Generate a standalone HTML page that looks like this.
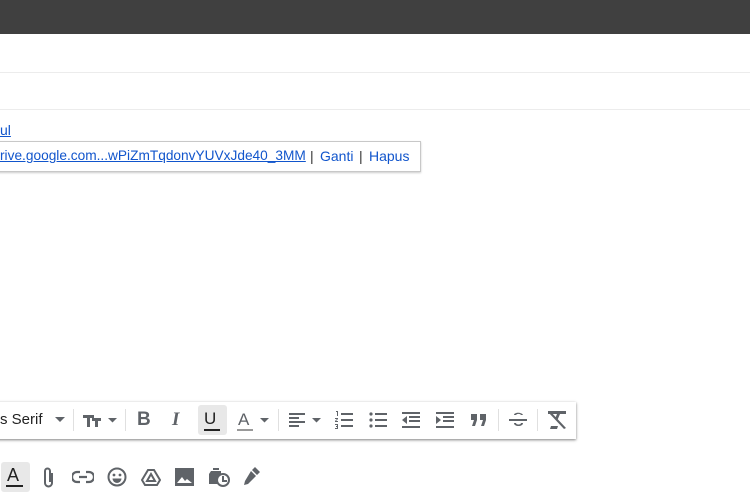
<!DOCTYPE html>
<html><head><style>
body{margin:0;width:750px;height:500px;overflow:hidden;background:#fff;font-family:"Liberation Sans",Arial,sans-serif;position:relative}
.a{position:absolute;white-space:nowrap}
.ic{position:absolute;fill:#5f6368;stroke:none}
</style></head><body>
<div class="a" style="left:0;top:0;width:750px;height:34px;background:#404040"></div>
<div class="a" style="left:0;top:72px;width:750px;height:1px;background:#ececec"></div>
<div class="a" style="left:0;top:109px;width:750px;height:1px;background:#ececec"></div>
<div class="a" style="left:0;top:122px;font-size:14px;color:#1155cc;text-decoration:underline">ul</div>
<div class="a" style="left:-10px;top:141px;width:429px;height:29px;border:1px solid #c8c8c8;box-shadow:0 1px 2px rgba(0,0,0,.2);background:#fff"></div>
<div class="a" style="left:0;top:148px;font-size:13.7px;color:#1155cc;text-decoration:underline">rive.google.com...wPiZmTqdonvYUVxJde40_3MM</div>
<div class="a" style="left:310px;top:148px;font-size:14px;color:#333">|</div>
<div class="a" style="left:320px;top:148px;font-size:14px;color:#1155cc">Ganti</div>
<div class="a" style="left:359px;top:148px;font-size:14px;color:#333">|</div>
<div class="a" style="left:369px;top:148px;font-size:14px;color:#1155cc">Hapus</div>

<div class="a" style="left:-10px;top:402px;width:586px;height:37px;background:#fff;box-shadow:0 1px 3px rgba(0,0,0,.35),0 1px 2px rgba(0,0,0,.2)"></div>
<div class="a" style="left:0;top:411px;font-size:15px;color:#222">s Serif</div>
<svg class="ic" style="left:55px;top:417px" width="10" height="6"><path d="M0 0h10L5 5z"/></svg>
<div class="a" style="left:73px;top:409px;width:1px;height:22px;background:#e0e0e0"></div>
<svg class="ic" style="left:83px;top:412px" width="20" height="16"><path d="M0 3h11v3H7v9H4V6H0zM9 6h9v3h-3v6h-3V9H9z"/></svg>
<svg class="ic" style="left:108px;top:418px" width="9" height="5"><path d="M0 0h9L4.5 4.5z"/></svg>
<div class="a" style="left:125px;top:409px;width:1px;height:22px;background:#e0e0e0"></div>
<div class="a" style="left:137px;top:409px;font-size:19px;font-weight:bold;color:#5f6368">B</div>
<div class="a" style="left:172px;top:409px;font-size:19px;font-weight:bold;font-style:italic;color:#5f6368;font-family:'Liberation Serif',serif">I</div>
<div class="a" style="left:198px;top:405px;width:29px;height:30px;background:#e8e8e8;border-radius:3px"></div>
<div class="a" style="left:204px;top:409px;font-size:17px;color:#222">U</div>
<div class="a" style="left:204px;top:429px;width:16px;height:2px;background:#222"></div>
<div class="a" style="left:238px;top:410px;font-size:17px;color:#5f6368">A</div>
<div class="a" style="left:237px;top:429px;width:16px;height:2px;background:#999"></div>
<svg class="ic" style="left:260px;top:418px" width="9" height="5"><path d="M0 0h9L4.5 4.5z"/></svg>
<div class="a" style="left:278px;top:409px;width:1px;height:22px;background:#e0e0e0"></div>
<svg class="ic" style="left:289px;top:413px" width="18" height="14"><path d="M0 0h16v2H0zM0 4h10v2H0zM0 8h16v2H0zM0 12h10v2H0z"/></svg>
<svg class="ic" style="left:312px;top:418px" width="9" height="5"><path d="M0 0h9L4.5 4.5z"/></svg>
<svg class="ic" style="left:335px;top:411px" width="20" height="18"><path d="M1 0h2v5H2V1H1zM0 7h3v1l-2 2h2v1H0v-1l2-2H0zM0 13h3v5H0v-1h2v-1H1v-1h1v-1H0zM6 2h12v2H6zM6 8h12v2H6zM6 14h12v2H6z"/></svg>
<svg class="ic" style="left:369px;top:411px" width="20" height="18"><circle cx="2" cy="3" r="1.6"/><circle cx="2" cy="9" r="1.6"/><circle cx="2" cy="15" r="1.6"/><path d="M6 2h12v2H6zM6 8h12v2H6zM6 14h12v2H6z"/></svg>
<svg class="ic" style="left:402px;top:412px" width="20" height="16"><path d="M0 0h18v2H0zM7 4h11v2H7zM7 8h11v2H7zM0 14h18v2H0zM5 4v8L0 8z"/></svg>
<svg class="ic" style="left:436px;top:412px" width="20" height="16"><path d="M0 0h18v2H0zM7 4h11v2H7zM7 8h11v2H7zM0 14h18v2H0zM0 4v8l5-4z"/></svg>
<svg class="ic" style="left:471px;top:414px" width="18" height="12"><path d="M0 0h6v6l-2 6H1l2-6H0zM9 0h6v6l-2 6h-3l2-6H9z"/></svg>
<div class="a" style="left:498px;top:409px;width:1px;height:22px;background:#e0e0e0"></div>
<svg class="ic" style="left:509px;top:411px" width="18" height="18"><path d="M0 8h18v2H0zM5 4c0-3 8-3 9 0h-2c-1-1.5-4-1.5-5 0zM5 12h2c0 2 5 2 5 0h2c0 4-9 4-9 0z"/></svg>
<div class="a" style="left:537px;top:409px;width:1px;height:22px;background:#e0e0e0"></div>
<svg class="ic" style="left:547px;top:411px" width="20" height="18"><path d="M1 0h18v3h-6l-3 7-2-2 2-5H1zM1 1l2-1 16 17-2 1z M4 15h7l-1 3H3z"/></svg>

<div class="a" style="left:1px;top:462px;width:29px;height:30px;background:#e8e8e8;border-radius:3px"></div>
<div class="a" style="left:7px;top:465px;font-size:18px;color:#222">A</div>
<div class="a" style="left:6px;top:485px;width:17px;height:2px;background:#222"></div>
<svg class="ic" style="left:43px;top:467px;fill:none;stroke:#5f6368;stroke-width:2" width="12" height="22"><path d="M9 6v10a3.5 3.5 0 0 1-7 0V4a2.5 2.5 0 0 1 5 0v11"/></svg>
<svg class="ic" style="left:72px;top:470px;fill:none;stroke:#5f6368;stroke-width:2.2" width="22" height="14"><path d="M8 2H5a5 5 0 0 0 0 10h3M14 2h3a5 5 0 0 1 0 10h-3M7 7h8"/></svg>
<svg class="ic" style="left:107px;top:467px" width="20" height="20"><circle cx="10" cy="10" r="8.5" fill="none" stroke="#5f6368" stroke-width="2"/><circle cx="7" cy="8" r="1.4"/><circle cx="13" cy="8" r="1.4"/><path d="M5.5 11.5h9a4.5 4.5 0 0 1-9 0z"/></svg>
<svg class="ic" style="left:141px;top:468px;fill:none;stroke:#5f6368;stroke-width:2" width="20" height="18"><path d="M7 2h6l6 10-3 5H4L1 12zM10 6l4 7H6z"/></svg>
<svg class="ic" style="left:175px;top:468px" width="19" height="18"><path d="M0 0h19v18H0z"/><path d="M2 15l5-6 3 4 2-2 5 4z" fill="#fff"/></svg>
<svg class="ic" style="left:208px;top:466px" width="22" height="22"><path d="M3 5h10v3a6 6 0 0 0-3 10H1V8z M5 2h6v2H5z"/><circle cx="15" cy="14" r="6" fill="none" stroke="#5f6368" stroke-width="2"/><path d="M14 10h2v4h3v2h-5z"/></svg>
<svg class="ic" style="left:243px;top:467px" width="18" height="20"><path d="M12 0l5 5-3 3-5-5zM8 4l5 5-8 8-4 1 1-4z"/></svg>
</body></html>
